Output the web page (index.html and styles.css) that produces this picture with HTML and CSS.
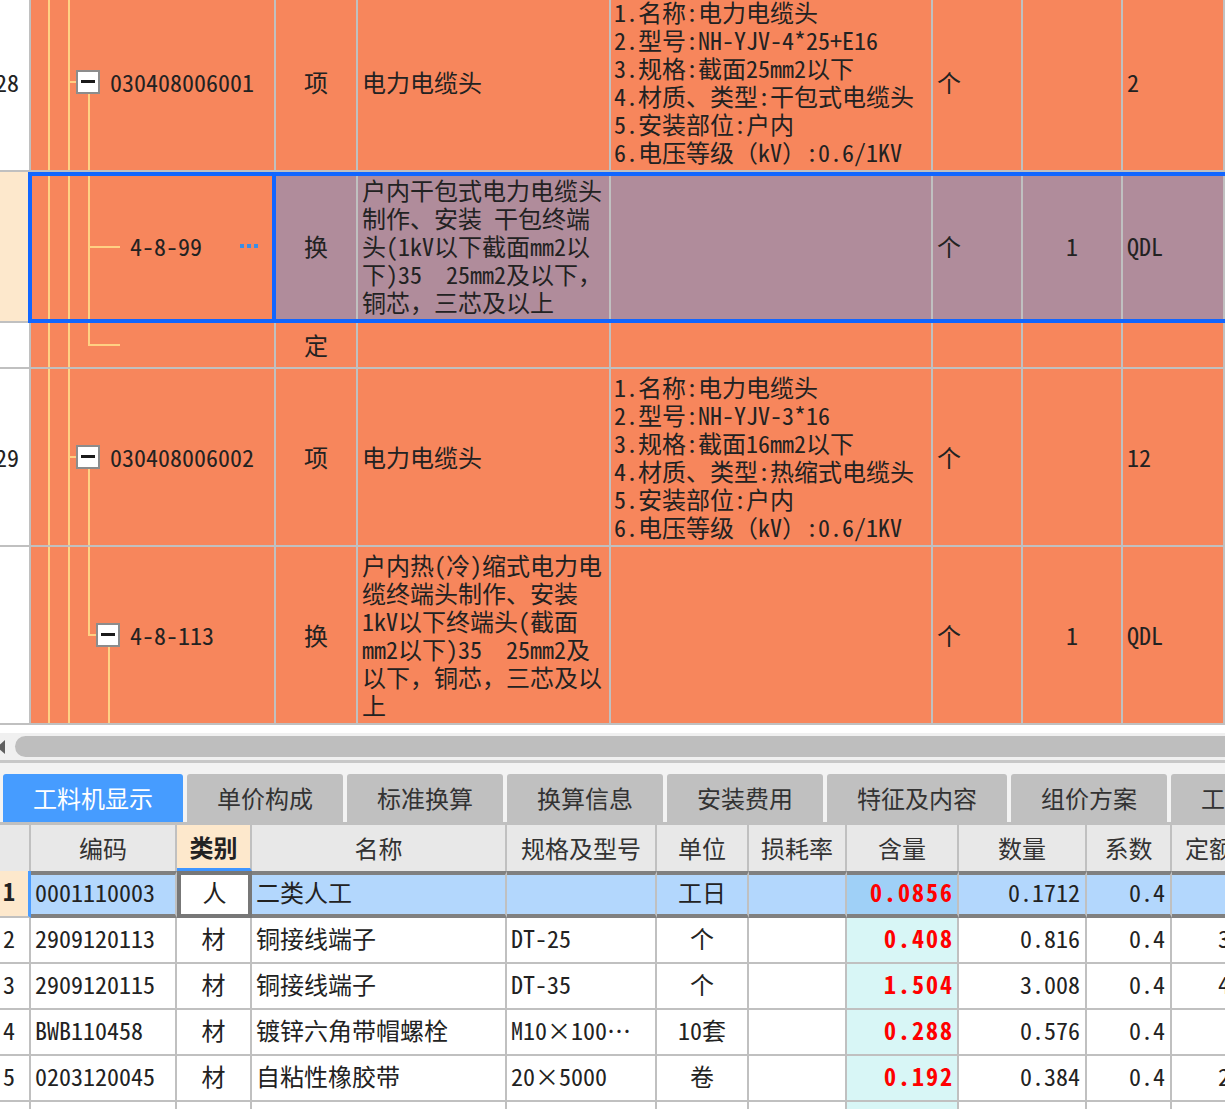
FILE: index.html
```html
<!DOCTYPE html>
<html lang="zh-CN">
<head>
<meta charset="utf-8">
<title>工料机显示</title>
<link rel="stylesheet" href="styles.css">
</head>
<body>
<div class="app">
  <section class="top">
    <div class="tgrid">
      <div class="trow">
        <div class="c num"><span>28</span></div>
        <div class="c code lv1">
          <i class="ln v1"></i><i class="ln v2"></i><i class="ln stub1"></i><i class="ln v3down"></i>
          <span class="box"></span><span class="cd">030408006001</span>
        </div>
        <div class="c type">项</div>
        <div class="c name">电力电缆头</div>
        <div class="c feat">1.名称:电力电缆头<br>2.型号:NH-YJV-4*25+E16<br>3.规格:截面25mm2以下<br>4.材质、类型:干包式电缆头<br>5.安装部位:户内<br>6.电压等级（kV）:0.6/1KV</div>
        <div class="c unit">个</div>
        <div class="c qty"></div>
        <div class="c last">2</div>
      </div>

      <div class="trow sel">
        <div class="c num peach"></div>
        <div class="c code leaf">
          <i class="ln v1"></i><i class="ln v2"></i><i class="ln v3"></i><i class="ln branch"></i>
          <span class="cd">4-8-99</span><span class="dots"></span>
        </div>
        <div class="c type">换</div>
        <div class="c name">户内干包式电力电缆头<br>制作、安装 干包终端<br>头(1kV以下截面mm2以<br>下)35&nbsp; 25mm2及以下，<br>铜芯，三芯及以上</div>
        <div class="c feat"></div>
        <div class="c unit">个</div>
        <div class="c qty">1</div>
        <div class="c last">QDL</div>
      </div>

      <div class="trow">
        <div class="c num"></div>
        <div class="c code leaf">
          <i class="ln v1"></i><i class="ln v2"></i><i class="ln v3top"></i><i class="ln branch"></i>
        </div>
        <div class="c type">定</div>
        <div class="c name"></div>
        <div class="c feat"></div>
        <div class="c unit"></div>
        <div class="c qty"></div>
        <div class="c last"></div>
      </div>

      <div class="trow">
        <div class="c num"><span>29</span></div>
        <div class="c code lv1">
          <i class="ln v1"></i><i class="ln v2"></i><i class="ln stub1"></i><i class="ln v3down"></i>
          <span class="box"></span><span class="cd">030408006002</span>
        </div>
        <div class="c type">项</div>
        <div class="c name">电力电缆头</div>
        <div class="c feat">1.名称:电力电缆头<br>2.型号:NH-YJV-3*16<br>3.规格:截面16mm2以下<br>4.材质、类型:热缩式电缆头<br>5.安装部位:户内<br>6.电压等级（kV）:0.6/1KV</div>
        <div class="c unit">个</div>
        <div class="c qty"></div>
        <div class="c last">12</div>
      </div>

      <div class="trow">
        <div class="c num"></div>
        <div class="c code lv2">
          <i class="ln v1"></i><i class="ln v2"></i><i class="ln v3top"></i><i class="ln stub2"></i><i class="ln v4down"></i>
          <span class="box"></span><span class="cd">4-8-113</span>
        </div>
        <div class="c type">换</div>
        <div class="c name">户内热(冷)缩式电力电<br>缆终端头制作、安装<br>1kV以下终端头(截面<br>mm2以下)35&nbsp; 25mm2及<br>以下，铜芯，三芯及以<br>上</div>
        <div class="c feat"></div>
        <div class="c unit">个</div>
        <div class="c qty">1</div>
        <div class="c last">QDL</div>
      </div>
    </div>
  </section>

  <div class="hscroll"><span class="arr"></span><span class="thumb"></span></div>

  <nav class="tabs">
    <span class="tab wide on">工料机显示</span>
    <span class="tab">单价构成</span>
    <span class="tab">标准换算</span>
    <span class="tab">换算信息</span>
    <span class="tab">安装费用</span>
    <span class="tab wide">特征及内容</span>
    <span class="tab">组价方案</span>
    <span class="tab">工作内容</span>
  </nav>

  <section class="btable">
    <div class="brow head">
      <div class="b"></div>
      <div class="b">编码</div>
      <div class="b kb">类别</div>
      <div class="b">名称</div>
      <div class="b">规格及型号</div>
      <div class="b">单位</div>
      <div class="b">损耗率</div>
      <div class="b">含量</div>
      <div class="b">数量</div>
      <div class="b">系数</div>
      <div class="b de">定额价</div>
    </div>
    <div class="brow cur">
      <div class="b rn">1</div>
      <div class="b">0001110003</div>
      <div class="b ctr kind">人</div>
      <div class="b">二类人工</div>
      <div class="b"></div>
      <div class="b ctr">工日</div>
      <div class="b"></div>
      <div class="b rt hl red">0.0856</div>
      <div class="b rt">0.1712</div>
      <div class="b rt">0.4</div>
      <div class="b de"></div>
    </div>
    <div class="brow">
      <div class="b rn">2</div>
      <div class="b">2909120113</div>
      <div class="b ctr">材</div>
      <div class="b">铜接线端子</div>
      <div class="b">DT-25</div>
      <div class="b ctr">个</div>
      <div class="b"></div>
      <div class="b rt hl red">0.408</div>
      <div class="b rt">0.816</div>
      <div class="b rt">0.4</div>
      <div class="b de">3.5</div>
    </div>
    <div class="brow">
      <div class="b rn">3</div>
      <div class="b">2909120115</div>
      <div class="b ctr">材</div>
      <div class="b">铜接线端子</div>
      <div class="b">DT-35</div>
      <div class="b ctr">个</div>
      <div class="b"></div>
      <div class="b rt hl red">1.504</div>
      <div class="b rt">3.008</div>
      <div class="b rt">0.4</div>
      <div class="b de">4.2</div>
    </div>
    <div class="brow">
      <div class="b rn">4</div>
      <div class="b">BWB110458</div>
      <div class="b ctr">材</div>
      <div class="b">镀锌六角带帽螺栓</div>
      <div class="b">M10×100…</div>
      <div class="b ctr">10套</div>
      <div class="b"></div>
      <div class="b rt hl red">0.288</div>
      <div class="b rt">0.576</div>
      <div class="b rt">0.4</div>
      <div class="b de"></div>
    </div>
    <div class="brow">
      <div class="b rn">5</div>
      <div class="b">0203120045</div>
      <div class="b ctr">材</div>
      <div class="b">自粘性橡胶带</div>
      <div class="b">20×5000</div>
      <div class="b ctr">卷</div>
      <div class="b"></div>
      <div class="b rt hl red">0.192</div>
      <div class="b rt">0.384</div>
      <div class="b rt">0.4</div>
      <div class="b de">2.1</div>
    </div>
    <div class="brow">
      <div class="b rn"></div>
      <div class="b"></div>
      <div class="b"></div>
      <div class="b"></div>
      <div class="b"></div>
      <div class="b"></div>
      <div class="b"></div>
      <div class="b hl"></div>
      <div class="b"></div>
      <div class="b"></div>
      <div class="b de"></div>
    </div>
  </section>
</div>
</body>
</html>
```

FILE: styles.css
```css
* { box-sizing: border-box; margin: 0; padding: 0; }

html, body {
  width: 1225px;
  height: 1109px;
  overflow: hidden;
  background: #fff;
}

body {
  font-family: "Noto Sans Mono CJK SC", "Noto Sans CJK SC", "Noto Sans", sans-serif;
  font-size: 24px;
  line-height: 28px;
  color: #222;
}

.app {
  height: 1109px;
  overflow: hidden;
  display: flex;
  flex-direction: column;
}

/* ---------- top grid ---------- */
.top {
  flex: none;
  height: 727px;
  overflow: hidden;
  background: #fff;
}

.tgrid { margin-top: -6px; }

.trow {
  display: grid;
  grid-template-columns: 31px 245px 82px 253px 322px 90px 100px 102px;
  position: relative;
}

.c {
  position: relative;
  display: flex;
  align-items: center;
  min-height: 46px;
  padding: 4px;
  background: #f7865c;
  border-right: 2px solid #c0c0c0;
  border-bottom: 2px solid #c0c0c0;
  white-space: nowrap;
}

.num {
  background: #fff;
  justify-content: flex-end;
  padding-right: 10px;
  overflow: hidden;
}
.num.peach { background: #fde8cc; }

.type { justify-content: center; }
.feat { padding-left: 3px; }
.qty { justify-content: center; }

.code.lv1 { padding-left: 45px; }
.code.lv2 { padding-left: 65px; }
.code.leaf { padding-left: 99px; }

.box {
  flex: none;
  position: relative;
  width: 24px;
  height: 24px;
  margin-right: 10px;
  border: 2px solid #8c8c8c;
  background: #fff;
}
.box::after {
  content: "";
  position: absolute;
  left: 3px;
  right: 3px;
  top: 8px;
  height: 3px;
  background: #1a1a1a;
}

.ln { position: absolute; background: #ffd083; }
.v1 { left: 17px; top: 0; bottom: 0; width: 2px; }
.v2 { left: 37px; top: 0; bottom: 0; width: 2px; }
.v3 { left: 57px; top: 0; bottom: 0; width: 2px; }
.v3top { left: 57px; top: 0; height: 50%; width: 2px; }
.v3down { left: 57px; top: calc(50% + 12px); bottom: 0; width: 2px; }
.v4down { left: 77px; top: calc(50% + 12px); bottom: 0; width: 2px; }
.stub1 { left: 37px; width: 8px; top: calc(50% - 1px); height: 2px; }
.stub2 { left: 57px; width: 8px; top: calc(50% - 1px); height: 2px; }
.branch { left: 57px; width: 32px; top: calc(50% - 1px); height: 2px; }

.dots {
  flex: none;
  margin-left: auto;
  margin-right: 12px;
  width: 18px;
  height: 4px;
  background: repeating-linear-gradient(90deg, #3a8ee6 0 4px, transparent 4px 7px);
}

/* selected row */
.sel .c { padding-bottom: 5px; }
.sel .type, .sel .name, .sel .feat, .sel .unit, .sel .qty, .sel .last {
  background: #b08c9b;
}
.trow.sel::after {
  content: "";
  position: absolute;
  left: 31px;
  right: 0;
  top: 0;
  bottom: 0;
  border-top: 4px solid #1166ff;
  border-bottom: 4px solid #1166ff;
  pointer-events: none;
}
.sel .code::after {
  content: "";
  position: absolute;
  left: -3px;
  top: 0;
  right: -2px;
  bottom: -2px;
  border: 4px solid #1166ff;
}

/* ---------- scrollbar ---------- */
.hscroll {
  flex: none;
  height: 33px;
  border-top: 6px solid #fff;
  background: #f0f0f0;
  display: flex;
  align-items: center;
  overflow: hidden;
}
.arr {
  flex: none;
  width: 0;
  height: 0;
  margin-left: -3px;
  border-right: 8px solid #606060;
  border-top: 7px solid transparent;
  border-bottom: 7px solid transparent;
}
.thumb {
  flex: 1;
  height: 21px;
  margin-left: 10px;
  margin-right: -20px;
  background: #bebebe;
  border-radius: 11px;
}

/* ---------- tabs ---------- */
.tabs {
  flex: none;
  display: flex;
  gap: 4px;
  height: 65px;
  padding: 11px 0 0 3px;
  background: #f3f3f3;
  border-top: 3px solid #c8c8c8;
  border-bottom: 3px solid #c0c0c0;
  overflow: hidden;
}
.tab {
  flex: none;
  width: 156px;
  height: 48px;
  display: flex;
  align-items: center;
  justify-content: center;
  background: #c0c0c0;
  color: #333;
  border-radius: 3px 3px 0 0;
  font-family: "Noto Sans CJK SC", "Noto Sans", sans-serif;
  font-size: 24px;
}
.tab.wide { width: 180px; }
.tab.on { background: #469cff; color: #fff; }

/* ---------- bottom table ---------- */
.btable { flex: none; }

.brow {
  display: grid;
  grid-template-columns: 31px 146px 75px 255px 150px 92px 98px 112px 128px 85px 53px;
}

.b {
  height: 46px;
  display: flex;
  align-items: center;
  padding: 0 4px 5px;
  background: #fff;
  border-right: 2px solid #c0c0c0;
  border-bottom: 2px solid #c0c0c0;
  white-space: nowrap;
  overflow: hidden;
}

.b.rn { padding-left: 3px; }
.ctr { justify-content: center; }
.rt { justify-content: flex-end; padding-right: 5px; }
.hl { background: #d8f6f6; }
.red { color: #f00; font-weight: bold; letter-spacing: 2px; }
.b.rt.red { padding-right: 3px; }
.b.de { padding-left: 46px; border-right: 0; }

.head .b {
  background: #e8e8e8;
  border-bottom: 0;
  padding-bottom: 0;
  justify-content: center;
  color: #333;
  font-family: "Noto Sans CJK SC", "Noto Sans", sans-serif;
}
.head .b.kb {
  background: #fde8cc;
  color: #222;
  font-weight: bold;
  border-bottom: 3px solid #3f95ff;
}
.head .b.de { justify-content: flex-start; padding-left: 13px; }

.cur .b {
  height: 47px;
  background: #b3d7fd;
  border-top: 4px solid #808080;
  border-bottom: 4px solid #808080;
  padding-bottom: 6px;
}
.cur .b.hl { background: #9fd0f7; }
.cur .b.rn {
  background: #fde8cc;
  border-top: 0;
  border-bottom: 2px solid #c0c0c0;
  border-right: 3px solid #4a9cff;
  font-weight: bold;
}
.cur .b.kind {
  background: #fff;
  border: 4px solid #777;
}
```
